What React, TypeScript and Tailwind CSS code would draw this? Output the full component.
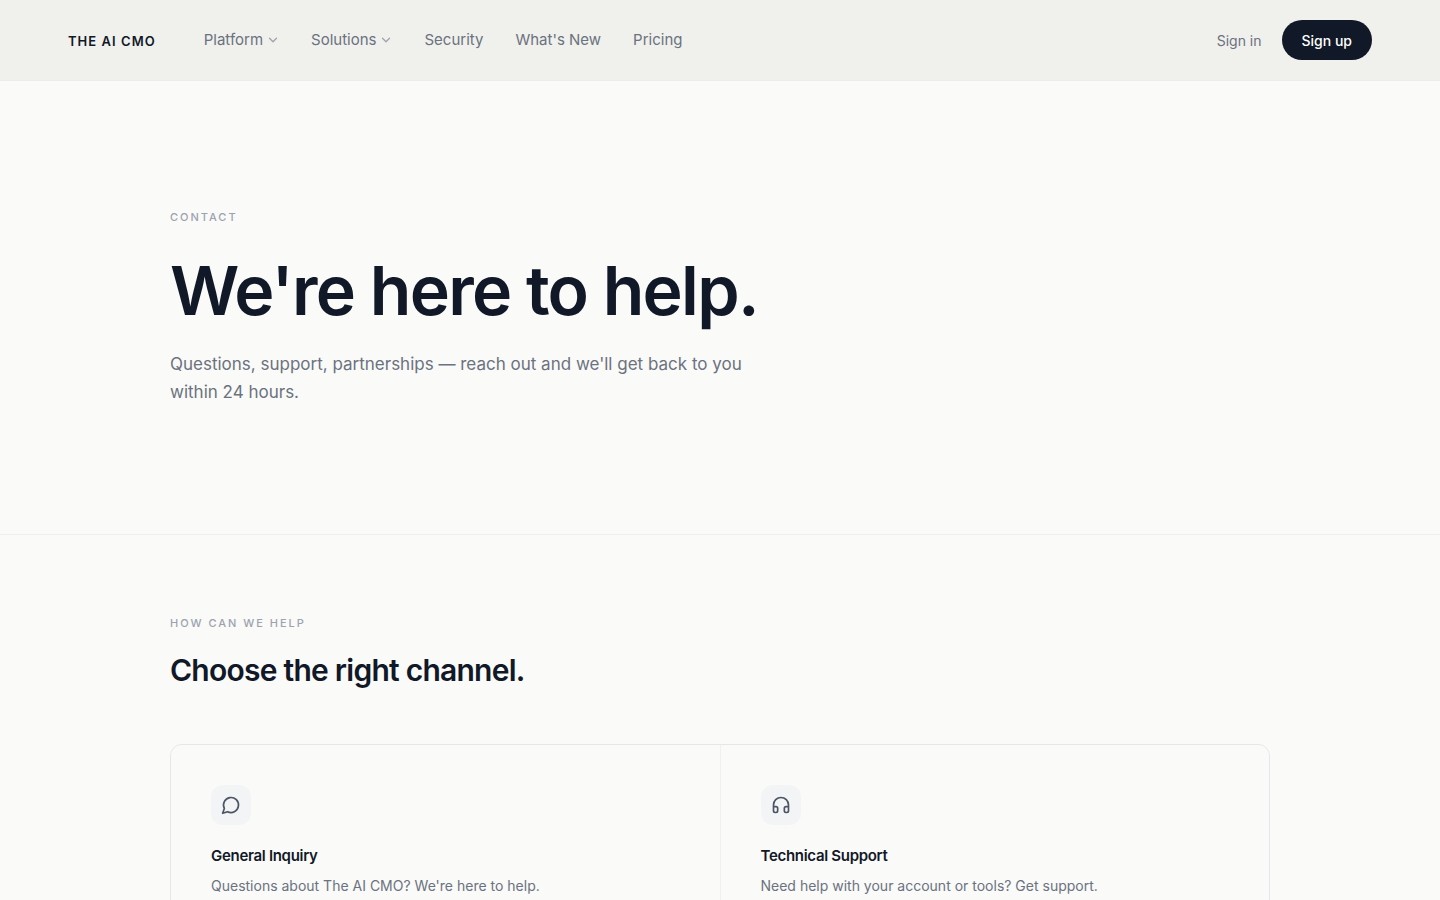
import React from 'react';

interface NavItem {
    label: string;
    hasMenu?: boolean;
}

interface ChannelProps {
    title: string;
    description: string;
    iconPath: string;
}

const navItems: NavItem[] = [
    { label: 'Platform', hasMenu: true },
    { label: 'Solutions', hasMenu: true },
    { label: 'Security' },
    { label: "What's New" },
    { label: 'Pricing' },
];

const channels: ChannelProps[] = [
    {
        title: 'General Inquiry',
        description: "Questions about The AI CMO? We're here to help.",
        iconPath: 'M7.9 20A9 9 0 1 0 4 16.1L2 22Z',
    },
    {
        title: 'Technical Support',
        description: 'Need help with your account or tools? Get support.',
        iconPath:
            'M3 14h3a2 2 0 0 1 2 2v3a2 2 0 0 1-2 2H5a2 2 0 0 1-2-2v-7a9 9 0 0 1 18 0v7a2 2 0 0 1-2 2h-1a2 2 0 0 1-2-2v-3a2 2 0 0 1 2-2h3',
    },
];

const Chevron: React.FC = () => (
    <svg
        className="size-3 opacity-60"
        viewBox="0 0 12 12"
        fill="none"
        stroke="currentColor"
        strokeWidth="1.3"
        strokeLinecap="round"
        strokeLinejoin="round"
    >
        <path d="M2.5 4.25L6 7.75l3.5-3.5" />
    </svg>
);

const Header: React.FC = () => (
    <header className="flex h-[81px] shrink-0 items-center border-b border-[#ecedeb] bg-[#f0f0ec] px-[68px]">
        <a href="#" className="mt-[3px] text-[13px] font-semibold tracking-[0.08em] text-[#111827]">
            THE AI CMO
        </a>
        <nav className="ml-12 flex items-center gap-8">
            {navItems.map(({ label, hasMenu }) => (
                <a key={label} href="#" className="flex items-center gap-1 text-[15px] text-[#6b7280]">
                    {label}
                    {hasMenu && <Chevron />}
                </a>
            ))}
        </nav>
        <div className="ml-auto flex items-center gap-5">
            <a href="#" className="mt-0.5 text-sm text-[#6b7280]">
                Sign in
            </a>
            <a
                href="#"
                className="flex h-10 items-center rounded-full bg-[#111827] px-5 pt-0.5 text-sm font-medium text-white"
            >
                Sign up
            </a>
        </div>
    </header>
);

const Eyebrow: React.FC<{ children: React.ReactNode }> = ({ children }) => (
    <p className="text-[11px] leading-[18px] font-medium tracking-[0.18em] text-[#9ca3af] uppercase">{children}</p>
);

const Channel: React.FC<ChannelProps> = ({ title, description, iconPath }) => (
    <a href="#" className="block bg-[#fafaf8] p-10">
        <div className="flex size-10 items-center justify-center rounded-xl bg-[#f3f4f6] text-[#4b5563]">
            <svg
                className="size-5"
                viewBox="0 0 24 24"
                fill="none"
                stroke="currentColor"
                strokeWidth="2"
                strokeLinecap="round"
                strokeLinejoin="round"
            >
                <path d={iconPath} />
            </svg>
        </div>
        <h3 className="mt-5 text-[15px] leading-[22px] font-semibold tracking-[-0.02em] text-[#111827]">{title}</h3>
        <p className="mt-2 text-sm leading-[22px] text-[#6b7280]">{description}</p>
    </a>
);

export default function App() {
    return (
        <div className="flex h-screen flex-col overflow-hidden bg-[#fafaf8] font-['Inter',sans-serif] antialiased">
            <Header />
            <section className="shrink-0 border-b border-[#eeefee] pt-[127px] pb-32">
                <div className="mx-auto w-[1100px]">
                    <Eyebrow>Contact</Eyebrow>
                    <h1 className="mt-[26px] text-[68px] leading-[76px] font-semibold tracking-[-0.025em] text-[#111827]">
                        We're here to help.
                    </h1>
                    <p className="mt-[22px] w-[600px] text-[17px] leading-7 text-[#6b7280]">
                        Questions, support, partnerships — reach out and we'll get back to you within 24 hours.
                    </p>
                </div>
            </section>
            <section className="shrink-0 pt-[79px]">
                <div className="mx-auto w-[1100px]">
                    <Eyebrow>How can we help</Eyebrow>
                    <h2 className="mt-[18px] text-[30px] leading-10 font-semibold tracking-[-0.025em] text-[#111827]">
                        Choose the right channel.
                    </h2>
                    <div className="mt-[54px] grid grid-cols-2 gap-px overflow-hidden rounded-xl border border-[#e5e7eb] bg-[#eef0f4]">
                        {channels.map((channel) => (
                            <Channel key={channel.title} {...channel} />
                        ))}
                    </div>
                </div>
            </section>
        </div>
    );
}
